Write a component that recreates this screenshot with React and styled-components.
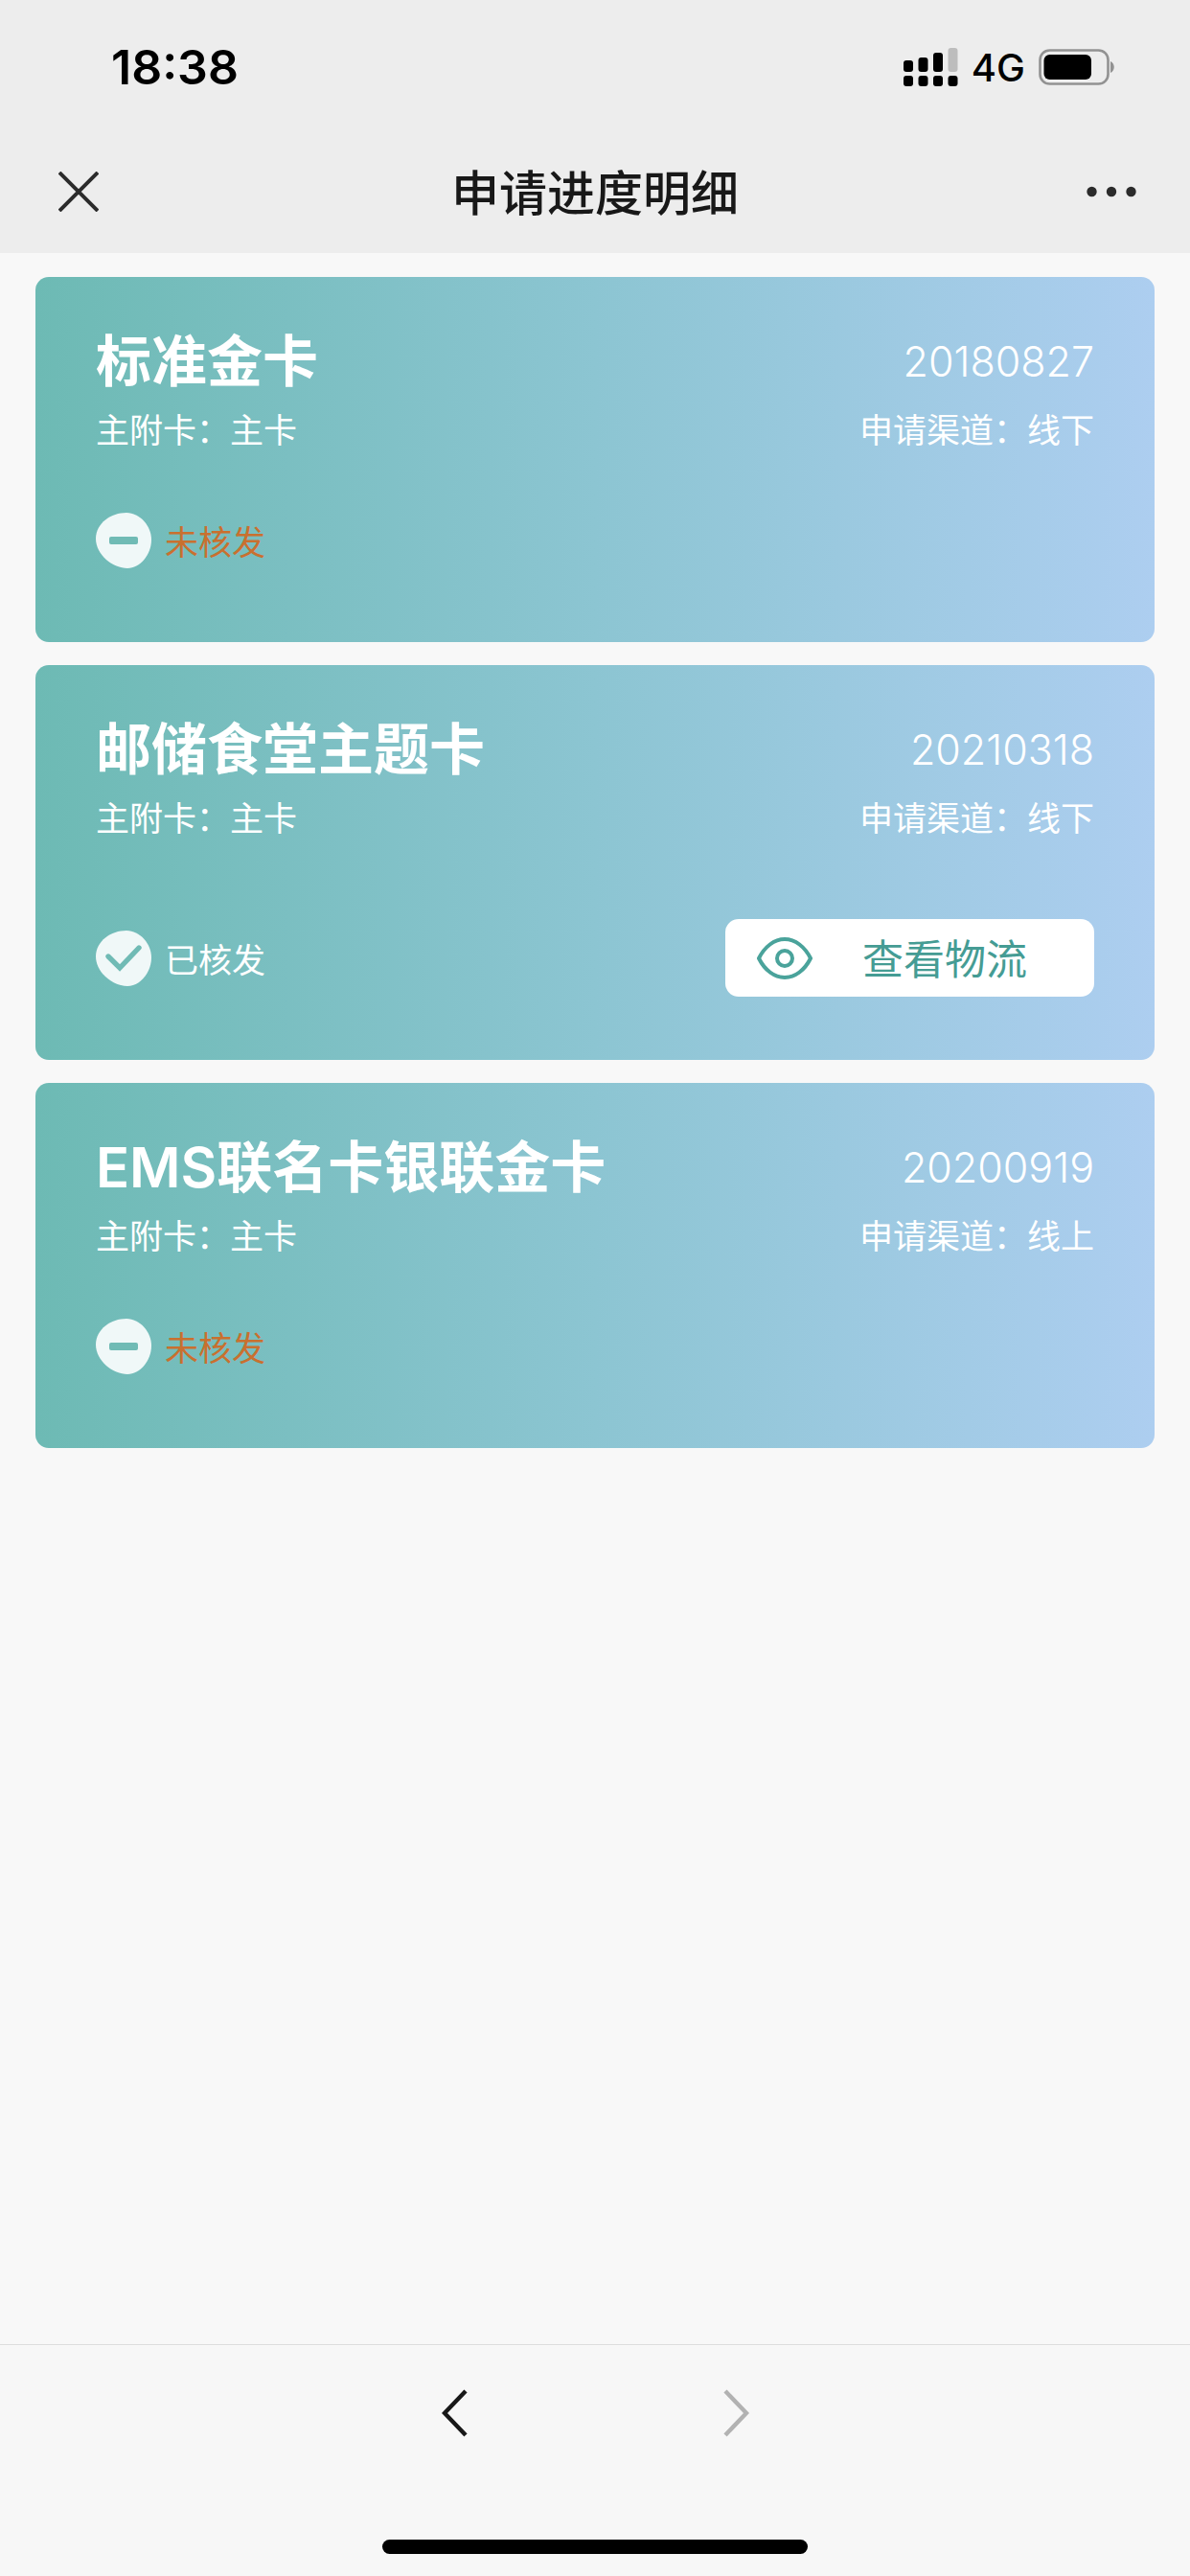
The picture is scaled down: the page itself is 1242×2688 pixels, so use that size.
import styled, { createGlobalStyle } from "styled-components";

const cards = [
  {
    name: "标准金卡",
    date: "20180827",
    channel: "线下",
    issued: false,
  },
  {
    name: "邮储食堂主题卡",
    date: "20210318",
    channel: "线下",
    issued: true,
  },
  {
    name: "EMS联名卡银联金卡",
    date: "20200919",
    channel: "线上",
    issued: false,
  },
];

const App = () => {
  return (
    <>
      <GlobalStyle />
      <Page>
        <Header>
          <StatusBar>
            <Time>18:38</Time>
            <Indicators>
              <SignalIcon />
              <Network>4G</Network>
              <BatteryIcon />
            </Indicators>
          </StatusBar>
          <TitleBar>
            <IconButton aria-label="关闭">
              <CloseIcon />
            </IconButton>
            <h1>申请进度明细</h1>
            <IconButton aria-label="更多">
              <MoreIcon />
            </IconButton>
          </TitleBar>
        </Header>
        <List>
          {cards.map((card) => (
            <ProgressCard key={card.name} {...card} />
          ))}
        </List>
        <Footer>
          <Nav>
            <NavButton aria-label="后退">
              <Chevron d="M25 2L3 25L25 48" />
            </NavButton>
            <NavButton aria-label="前进" disabled>
              <Chevron d="M3 2L25 25L3 48" />
            </NavButton>
          </Nav>
          <HomeIndicator />
        </Footer>
      </Page>
    </>
  );
};

//Card
const ProgressCard = ({ name, date, channel, issued }) => {
  return (
    <Card>
      <CardRow>
        <h2>{name}</h2>
        <CardDate>{date}</CardDate>
      </CardRow>
      <CardInfo>
        <span>主附卡：主卡</span>
        <span>申请渠道：{channel}</span>
      </CardInfo>
      <CardStatus $tall={issued}>
        <Status $issued={issued}>
          {issued ? <CheckIcon /> : <MinusIcon />}
          <span>{issued ? "已核发" : "未核发"}</span>
        </Status>
        {issued && (
          <LogisticsButton>
            <EyeIcon />
            <span>查看物流</span>
          </LogisticsButton>
        )}
      </CardStatus>
    </Card>
  );
};

//Icons
const SignalIcon = () => (
  <svg width="57" height="40" viewBox="0 0 57 40">
    <rect x="0" y="13" width="10" height="12" rx="3" />
    <rect x="15.5" y="10" width="10" height="15" rx="3" />
    <rect x="31" y="5" width="10" height="20" rx="3" />
    <rect x="46.5" y="0" width="10" height="25" rx="3" fill="#bdbdbd" />
    <rect x="0" y="29" width="10" height="11" rx="3" />
    <rect x="15.5" y="29" width="10" height="11" rx="3" />
    <rect x="31" y="29" width="10" height="11" rx="3" />
    <rect x="46.5" y="29" width="10" height="11" rx="3" />
  </svg>
);

const BatteryIcon = () => (
  <svg width="80" height="38" viewBox="0 0 80 38">
    <rect
      x="1.5"
      y="1.5"
      width="71"
      height="35"
      rx="10"
      fill="none"
      stroke="#929292"
      strokeWidth="2.6"
    />
    <rect x="5.5" y="6" width="49.5" height="26" rx="6" />
    <path d="M75 13C80 15 80 23 75 25Z" fill="#929292" />
  </svg>
);

const CloseIcon = () => (
  <svg width="42" height="42" viewBox="0 0 42 42">
    <path
      d="M1 1L41 41M41 1L1 41"
      stroke="#2b2b2b"
      strokeWidth="4"
    />
  </svg>
);

const MoreIcon = () => (
  <svg width="52" height="12" viewBox="0 0 52 12" fill="#2b2b2b">
    <circle cx="5.5" cy="6" r="5.2" />
    <circle cx="26" cy="6" r="5.2" />
    <circle cx="46.5" cy="6" r="5.2" />
  </svg>
);

const Blob = () => (
  <path
    d="M32 0C46 0 58 14 58 28C58 44 46 58 33 58C18 58 0 44 0 27C0 11 16 0 32 0Z"
    fill="#f0f8f8"
  />
);

const MinusIcon = () => (
  <svg width="58" height="58" viewBox="0 0 58 58">
    <Blob />
    <rect x="14" y="25" width="30" height="8" rx="2" fill="#70bbb5" />
  </svg>
);

const CheckIcon = () => (
  <svg width="58" height="58" viewBox="0 0 58 58">
    <Blob />
    <path
      d="M13 27L25 39L45 18"
      fill="none"
      stroke="#70bbb5"
      strokeWidth="5.4"
      strokeLinecap="round"
    />
  </svg>
);

const EyeIcon = () => (
  <svg width="58" height="44" viewBox="0 0 58 44">
    <g fill="none" stroke="#4aa39b" strokeWidth="4">
      <path d="M2 22C8 10 18 2 29 2S50 10 56 22C50 34 40 42 29 42S8 34 2 22Z" />
      <circle cx="29" cy="22" r="8" />
    </g>
  </svg>
);

const Chevron = ({ d }) => (
  <svg width="28" height="50" viewBox="0 0 28 50">
    <path d={d} fill="none" stroke="currentColor" strokeWidth="4.4" />
  </svg>
);

const GlobalStyle = createGlobalStyle`
  * {
    margin: 0;
    padding: 0;
    box-sizing: border-box;
  }
  body {
    background: #f8f8f8;
    font-family: Inter, "Noto Sans CJK SC", sans-serif;
  }
  button {
    background: none;
    border: none;
    font-family: inherit;
    cursor: pointer;
  }
  svg {
    display: block;
    flex-shrink: 0;
  }
`;

const Page = styled.div`
  min-height: 100vh;
  display: flex;
  flex-direction: column;
`;

const Header = styled.header`
  background: #ededed;
`;

const StatusBar = styled.div`
  height: 136px;
  padding: 4px 78px 0px 116px;
  display: flex;
  align-items: center;
  justify-content: space-between;
`;

const Time = styled.span`
  font-size: 50px;
  font-weight: 600;
`;

const Indicators = styled.div`
  display: flex;
  align-items: center;
  gap: 14px;
`;

const Network = styled.span`
  font-size: 40px;
  font-weight: 500;
`;

const TitleBar = styled.div`
  height: 128px;
  padding: 0px 56px;
  display: grid;
  grid-template-columns: 52px 1fr 52px;
  align-items: center;
  h1 {
    padding-bottom: 5px;
    color: #181818;
    font-size: 50px;
    font-weight: 500;
    text-align: center;
  }
`;

const IconButton = styled.button`
  display: flex;
  justify-content: center;
`;

const List = styled.main`
  flex: 1;
  display: flex;
  flex-direction: column;
  gap: 24px;
  padding: 25px 37px;
`;

const Card = styled.section`
  padding: 49px 63px 66px;
  border-radius: 14px;
  background: linear-gradient(to right, #6dbab4, #8cc5d2 50%, #adcef0);
  color: white;
`;

const CardRow = styled.div`
  display: flex;
  align-items: center;
  justify-content: space-between;
  h2 {
    font-size: 58px;
    line-height: 78px;
    font-weight: 600;
  }
`;

const CardDate = styled.span`
  font-size: 43px;
  font-weight: 300;
`;

const CardInfo = styled.div`
  display: flex;
  justify-content: space-between;
  font-size: 35px;
  line-height: 66px;
`;

const CardStatus = styled.div`
  margin-top: ${(props) => (props.$tall ? "72px" : "41px")};
  min-height: 81px;
  display: flex;
  align-items: center;
  justify-content: space-between;
`;

const Status = styled.div`
  display: flex;
  align-items: center;
  gap: 14px;
  color: ${(props) => (props.$issued ? "white" : "#c9702f")};
  font-size: 35px;
`;

const LogisticsButton = styled.button`
  width: 385px;
  height: 81px;
  padding: 0px 33px;
  display: flex;
  align-items: center;
  gap: 52px;
  border-radius: 14px;
  background: white;
  color: #459c94;
  font-size: 43px;
  span {
    padding-bottom: 4px;
  }
`;

const Footer = styled.footer`
  height: 242px;
  border-top: 1px solid #dedede;
  background: #f7f7f7;
  display: flex;
  flex-direction: column;
  align-items: center;
  justify-content: space-between;
  padding: 46px 0px 23px;
`;

const Nav = styled.nav`
  display: flex;
  gap: 265px;
`;

const NavButton = styled.button`
  color: #181818;
  &:disabled {
    color: #b2b2b2;
    cursor: default;
  }
`;

const HomeIndicator = styled.div`
  width: 444px;
  height: 15px;
  border-radius: 8px;
  background: black;
`;

export default App;
